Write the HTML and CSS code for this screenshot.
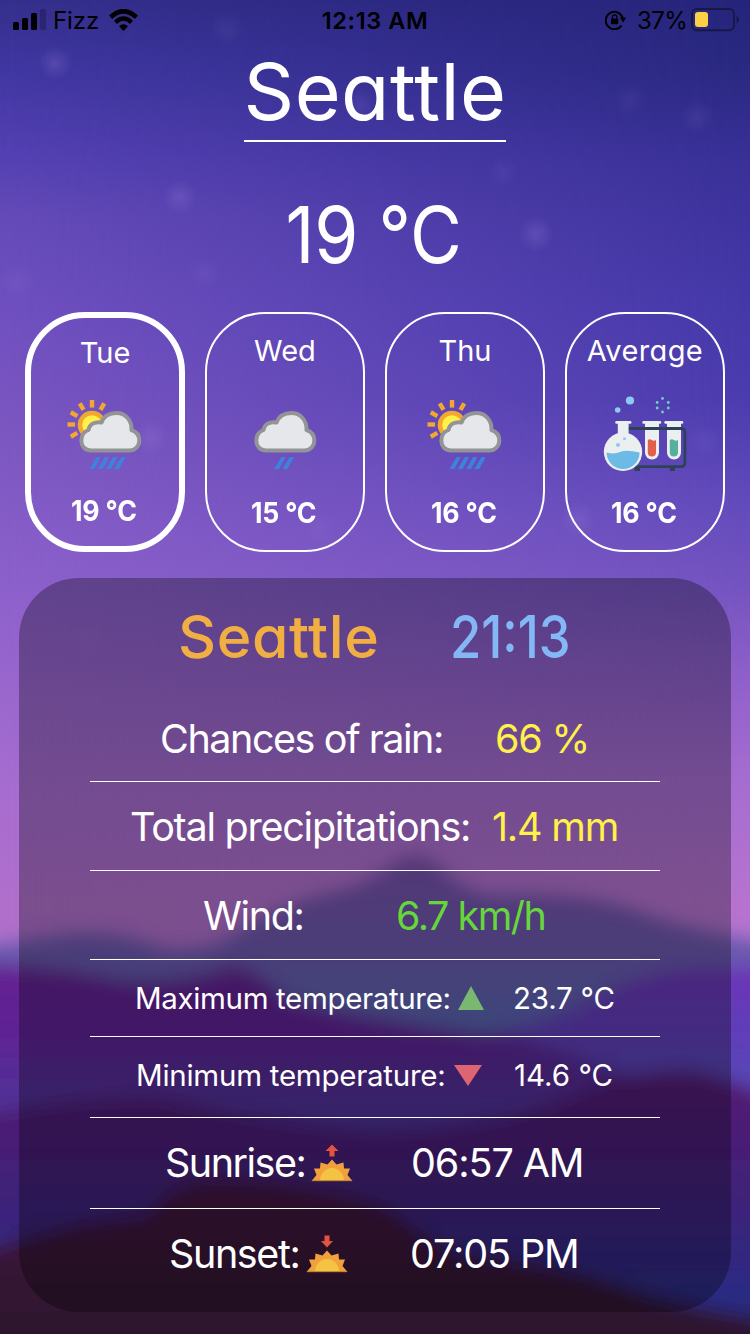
FILE: index.html
```
<!DOCTYPE html>
<html lang="en">
<head>
<meta charset="utf-8">
<title>Weather</title>
<link rel="stylesheet" href="styles.css">
</head>
<body>
<div class="app">
  <svg class="scene" viewBox="0 0 750 1334" aria-hidden="true">
    <defs>
      <linearGradient id="far" x1="0" y1="860" x2="0" y2="1040" gradientUnits="userSpaceOnUse"><stop offset="0" stop-color="#774faa"/><stop offset=".5" stop-color="#6b58ad"/><stop offset="1" stop-color="#5368b0"/></linearGradient>
      <linearGradient id="right" x1="0" y1="965" x2="0" y2="1090" gradientUnits="userSpaceOnUse"><stop offset="0" stop-color="#6c33b8"/><stop offset="1" stop-color="#5548b8"/></linearGradient>
      <linearGradient id="mid" x1="0" y1="960" x2="0" y2="1130" gradientUnits="userSpaceOnUse"><stop offset="0" stop-color="#642091"/><stop offset=".45" stop-color="#5e2494"/><stop offset="1" stop-color="#4a3698"/></linearGradient>
      <linearGradient id="near" x1="0" y1="1080" x2="0" y2="1290" gradientUnits="userSpaceOnUse"><stop offset="0" stop-color="#531a72"/><stop offset=".5" stop-color="#412178"/><stop offset="1" stop-color="#2b2a82"/></linearGradient>
      <linearGradient id="front" x1="0" y1="1180" x2="0" y2="1334" gradientUnits="userSpaceOnUse"><stop offset="0" stop-color="#42183e"/><stop offset="1" stop-color="#2c162d"/></linearGradient>
      <radialGradient id="star"><stop offset="0" stop-color="#a78be0" stop-opacity=".22"/><stop offset="1" stop-color="#a78be0" stop-opacity="0"/></radialGradient>
      <filter id="soft" x="-10%" y="-20%" width="120%" height="140%"><feGaussianBlur stdDeviation="9"/></filter>
    </defs>
    <g fill="url(#star)">
      <circle cx="55" cy="63" r="17"/><circle cx="227" cy="29" r="17" opacity=".4"/><circle cx="360" cy="105" r="16" opacity=".6"/><circle cx="180" cy="197" r="17"/><circle cx="536" cy="234" r="18"/><circle cx="697" cy="117" r="17" opacity=".5"/><circle cx="630" cy="100" r="16" opacity=".35"/><circle cx="503" cy="172" r="15" opacity=".4"/><circle cx="205" cy="273" r="15" opacity=".4"/><circle cx="18" cy="282" r="17" opacity=".4"/><circle cx="151" cy="438" r="18" opacity=".8"/><circle cx="578" cy="520" r="18" opacity=".8"/><circle cx="320" cy="528" r="16" opacity=".4"/><circle cx="704" cy="441" r="16" opacity=".4"/><circle cx="88" cy="640" r="18" opacity=".4"/>
    </g>
    <g filter="url(#soft)">
      <path fill="url(#far)" d="M-40 950L40 938Q110 925 160 948Q210 955 240 930Q290 900 350 888Q380 875 395 862Q415 850 435 862Q460 890 490 895Q590 892 640 912Q700 935 790 945V1150H-40Z"/>
      <path fill="url(#right)" d="M440 1040Q530 1030 590 1000Q650 965 720 968L790 965V1150H440Z"/>
      <path fill="url(#mid)" d="M-40 962Q60 965 120 980Q180 985 235 965Q260 972 290 1000Q380 1022 500 1035Q570 1050 620 1072L790 1110V1180H-40Z"/>
      <path fill="url(#near)" d="M-40 1118Q80 1095 160 1098Q260 1120 370 1130Q480 1130 560 1100Q620 1070 690 1070Q740 1080 790 1105V1380H-40Z"/>
      <path fill="url(#front)" d="M-40 1265Q30 1225 150 1215Q170 1180 215 1180Q310 1182 385 1206Q420 1235 460 1255Q560 1262 640 1292Q700 1310 790 1322V1400H-40Z"/>
    </g>
  </svg>

  <div class="status">
    <div class="status-left">
      <svg width="34" height="22" viewBox="13 9 34 22"><rect x="13" y="22" width="6" height="8" rx="1.5"/><rect x="22" y="18" width="6" height="12" rx="1.5"/><rect x="31" y="13" width="6" height="17" rx="1.5"/><rect x="40" y="9" width="6" height="21" rx="1.5" opacity=".22"/></svg>
      <span class="carrier">Fizz</span>
      <svg width="30" height="22" viewBox="109 9 30 22" fill="none" stroke="#000"><path stroke-width="4.6" d="M110.6 17.3Q123.5 5.2 136.4 17.3"/><path stroke-width="4.4" d="M115.5 22.3Q123.5 14.8 131.5 22.3"/><path fill="#000" stroke="none" d="M119 26.3Q123.5 22.2 128 26.3L123.5 31Z"/></svg>
    </div>
    <span class="clock">12:13 AM</span>
    <div class="status-right">
      <svg width="22" height="20" viewBox="605 11 22 20" fill="none" stroke="#000"><path stroke-width="2" d="M621.6 26.5A8.7 8.7 0 1 1 623 20"/><path fill="#000" stroke="none" d="M619.8 18.6H626L623.2 23.5Z"/><rect x="611" y="19.5" width="7.2" height="5.8" rx="1" fill="#000" stroke="none"/><path stroke-width="1.3" d="M612.4 20V18a2.2 2.2 0 0 1 4.4 0V20"/></svg>
      <span class="charge">37%</span>
      <svg width="50" height="24" viewBox="691 8 50 24"><rect x="692" y="9" width="42" height="21.3" rx="5" fill="none" stroke="#171848" stroke-width="2"/><rect x="695" y="12" width="13" height="15" rx="3" fill="#fbd044"/><path fill="#171848" d="M736.5 16Q739 17 739 19.5Q739 22 736.5 23Z"/></svg>
    </div>
  </div>

  <h1 class="city"><span>Seattle</span></h1>
  <div class="now"><span>19 °C</span></div>

  <div class="cards">
    <div class="card card-active">
      <span class="day">Tue</span>
      <svg width="80" height="80" viewBox="65 392 80 80"><g fill="#f2a731"><g id="rays"><rect x="89.800" y="400" width="4.400" height="7.600"/><rect x="89.800" y="400" width="4.400" height="7.600" transform="rotate(30 92 424.5)"/><rect x="89.800" y="400" width="4.400" height="7.600" transform="rotate(-30 92 424.5)"/><rect x="89.800" y="400" width="4.400" height="7.600" transform="rotate(-60 92 424.5)"/><rect x="89.800" y="400" width="4.400" height="7.600" transform="rotate(-90 92 424.5)"/><rect x="89.800" y="400" width="4.400" height="7.600" transform="rotate(-120 92 424.5)"/></g><circle cx="92" cy="425" r="14.3"/></g><circle cx="92" cy="425" r="9.8" fill="#fff04a"/><path id="cloud" fill="#e6e7ea" stroke="#929498" stroke-width="4" stroke-linejoin="round" d="M91 450.5C84.500 450.500 81.300 445.500 81.300 440.500C81.300 435 84.500 431.500 88.500 430C89.500 424 95 421.500 101.500 422.500C104 416 110 413 116.500 413C125 413 132 420 131.500 430C136 431.500 139.300 435 139.300 440.500C139.300 446 135 450.500 129.500 450.500Z"/><path fill="#3d82dc" d="M98 457h4.300l-6.500 12h-4.800zM106.300 457h4.300l-6.500 12h-4.800zM114.600 457h4.300l-6.500 12h-4.800zM122.900 457h4.300l-6.500 12h-4.800z" transform="translate(-1.500 0)"/></svg>
      <span class="temp">19 °C</span>
    </div>
    <div class="card">
      <span class="day">Wed</span>
      <svg width="80" height="80" viewBox="70 392 80 80"><use href="#cloud"/><path fill="#3d82dc" d="M106.300 457h4.300l-6.500 12h-4.800zM114.600 457h4.300l-6.500 12h-4.800z"/></svg>
      <span class="temp">15 °C</span>
    </div>
    <div class="card">
      <span class="day">Thu</span>
      <svg width="80" height="80" viewBox="65 392 80 80"><g fill="#f2a731"><use href="#rays"/><circle cx="92" cy="425" r="14.3"/></g><circle cx="92" cy="425" r="9.8" fill="#fff04a"/><use href="#cloud"/><path fill="#3d82dc" d="M98 457h4.300l-6.500 12h-4.800zM106.300 457h4.300l-6.500 12h-4.800zM114.600 457h4.300l-6.500 12h-4.800zM122.900 457h4.300l-6.500 12h-4.800z" transform="translate(-1.500 0)"/></svg>
      <span class="temp">16 °C</span>
    </div>
    <div class="card">
      <span class="day avg">Average</span>
      <svg width="84" height="80" viewBox="603 392 84 80"><circle cx="630" cy="400.500" r="4.100" fill="#8ec9f2"/><circle cx="617.700" cy="410" r="2.800" fill="#8ec9f2"/><g fill="#72cfc2"><circle cx="662.500" cy="398.500" r="1.400"/><circle cx="668.300" cy="402.500" r="1.400"/><circle cx="668.300" cy="408" r="1.400"/><circle cx="662.500" cy="412" r="1.400"/><circle cx="657.200" cy="408" r="1.400"/><circle cx="657.200" cy="402.500" r="1.400"/></g>
      <g fill="#ebeff0"><rect x="642.300" y="421" width="19" height="2.800" rx="1.400"/><path d="M645 422h14v30.500a7 7 0 0 1-14 0z"/><rect x="664.300" y="421" width="19" height="2.800" rx="1.400"/><path d="M667 422h14v30.500a7 7 0 0 1-14 0z"/></g>
      <path fill="#e0604a" d="M647.800 440q2-1.500 4 0t4.200 0v12.500a4.100 4.100 0 0 1-8.200 0z"/><path fill="#57b09c" d="M669.800 440q2-1.500 4 0t4.200 0v12.500a4.100 4.100 0 0 1-8.200 0z"/>
      <path fill="none" stroke="#2f4158" stroke-width="2.800" d="M628 428.500H681Q684.900 428.500 684.900 432.500V462.500Q684.900 466.700 681 466.700H634"/><path fill="#2f4158" d="M634.500 466h5.500v5h-5.500zM670 466h5v5h-5z"/>
      <g fill="#ebeff0"><rect x="615.200" y="421" width="16.300" height="2.800" rx="1.400"/><path d="M617.800 422h10.800v13h-10.800z"/><circle cx="623" cy="451.800" r="19.200"/></g><path fill="#6bbbe6" d="M606.600 452.500Q614 454.500 620 452T639.600 452.500A16.500 16.500 0 0 1 606.600 452.500"/><circle cx="618" cy="445" r="2.100" fill="#8ec9f2"/><circle cx="624.500" cy="438.700" r="1.500" fill="#8ec9f2"/></svg>
      <span class="temp">16 °C</span>
    </div>
  </div>

  <section class="panel">
    <div class="heading"><span class="place">Seattle</span><span class="time">21:13</span></div>
    <div class="rows">
      <div class="row rain"><span class="label">Chances of rain:</span><span class="value">66 %</span></div>
      <div class="row precip"><span class="label">Total precipitations:</span><span class="value">1.4 mm</span></div>
      <div class="row wind"><span class="label">Wind:</span><span class="value">6.7 km/h</span></div>
      <div class="row max"><span class="label">Maximum temperature:</span><svg width="28" height="24" viewBox="0 0 28 24"><path fill="#78b870" d="M14 0L27 24H1Z"/></svg><span class="value">23.7 °C</span></div>
      <div class="row min"><span class="label">Minimum temperature:</span><svg width="28" height="21" viewBox="0 0 28 21"><path fill="#dc6473" d="M0 0H28L14 21Z"/></svg><span class="value">14.6 °C</span></div>
      <div class="row sunrise"><span class="label">Sunrise:</span><svg width="42" height="38" viewBox="0 0 42 38"><path fill="#e15540" d="M21 0.500L27.500 7H23.500V12.500H18.500V7H14.500Z"/><g id="sun"><path fill="#f2a03c" d="M0.500 37L5.500 31L3 24.500L9 24.500L9.500 18.500L16.500 20.500L21 15.500L25.500 20.500L32.500 18.500L33 24.500L39 24.500L36.500 31L41.500 37Z"/><path fill="#f4c343" d="M9 36.500A12 12.500 0 0 1 33 36.500Z"/><path stroke="#b97d2c" d="M1 36.700H41"/></g></svg><span class="value">06:57 AM</span></div>
      <div class="row sunset"><span class="label">Sunset:</span><svg width="42" height="38" viewBox="0 0 42 38"><path fill="#e15540" d="M18.500 0.500H23.500V6H27L21 12.500L15 6H18.500Z"/><use href="#sun"/></svg><span class="value">07:05 PM</span></div>
    </div>
  </section>
</div>
</body>
</html>
```
FILE: styles.css
```
* { box-sizing: border-box; }
body { margin: 0; font-family: Inter, "Liberation Sans", sans-serif; color: #fff; }
svg { display: block; flex: none; }

.app {
  position: relative;
  isolation: isolate;
  width: 750px;
  height: 1334px;
  overflow: hidden;
  background: linear-gradient(#352f8c 0, #3f36a0 60px, #5340b2 150px, #654bb9 220px, #7050c0 310px, #7e58c2 450px, #8c60cb 580px, #9b68ce 700px, #a86dd0 800px, #b070cc 900px);
}
.app::before {
  content: "";
  position: absolute;
  inset: 0;
  z-index: -2;
  background: linear-gradient(#25247a 0, #2a2981 70px, #393097 160px, #4438a8 300px, #4b3cae 400px, #614abb 500px, #7253bf 580px, #8f60ca 680px, #a56dd0 780px, #b573cf 900px);
  mask-image: linear-gradient(to right, transparent, #000);
}
.scene { position: absolute; inset: 0; width: 750px; height: 1334px; z-index: -1; }

.status {
  display: grid;
  grid-template-columns: 1fr auto 1fr;
  align-items: center;
  height: 40px;
  padding: 0 9px 0 13px;
  color: #000;
  font-size: 24px;
}
.status-left, .status-right { display: flex; align-items: center; }
.status-right { justify-content: flex-end; }
.carrier { width: 55px; padding-left: 6px; margin-right: 7px; letter-spacing: -.1px; }
.clock { margin-right: 4px; font-weight: 600; font-size: 23.5px; letter-spacing: .6px; }
.charge { width: 54px; margin-left: 10px; letter-spacing: -.6px; }

.city, .now, .day, .temp, .heading { font-feature-settings: "cv11"; white-space: nowrap; }
.city { display: flex; justify-content: center; width: 262px; height: 102px; margin: 0 auto; border-bottom: 2px solid #fff; font-size: 79px; font-weight: 400; line-height: 103px; letter-spacing: .4px; }
.now { height: 170px; padding: 15px 3px 0 0; line-height: 155px; text-align: center; font-size: 79px; font-weight: 420; transform: scaleX(.9); }

.cards { display: flex; gap: 20px; padding: 0 25px; height: 240px; }
.card { display: flex; flex-direction: column; align-items: center; justify-content: space-between; width: 160px; padding: 19px 0; border: 2px solid #fff; border-radius: 60px; }
.card-active { border-width: 6px; padding: 17px 0; }
.day { font-size: 29px; line-height: 36px; font-weight: 400; }
.avg { letter-spacing: .4px; }
.temp { padding-right: 2px; font-size: 29px; line-height: 36px; font-weight: 650; letter-spacing: -.2px; transform: scaleX(.92); }

.panel { width: 712px; height: 734px; margin: 26px auto 0; border-radius: 60px; background: rgba(0, 0, 0, .3); }
.heading { display: flex; height: 118px; padding-left: 159px; line-height: 118px; font-size: 59px; font-weight: 500; }
.place { width: 272px; color: #f0ae43; letter-spacing: .6px; }
.time { color: #83b7f5; transform: scaleX(.86); transform-origin: left; }

.rows { width: 570px; margin: 0 auto; }
.row { display: flex; align-items: center; border-bottom: 1px solid #fff; font-size: 39.5px; white-space: nowrap; letter-spacing: -1.4px; }
.row:last-child { border-bottom: 0; }
.rain { height: 86px; padding-left: 70px; }
.rain .label { width: 335px; letter-spacing: -1.45px; }
.precip { height: 89px; padding: 2px 0 0 40px; }
.precip .label { width: 362px; letter-spacing: -1.25px; }
.rain .value, .precip .value { color: #fff04a; letter-spacing: -1.2px; }
.wind { height: 89px; padding: 1px 0 0 113px; }
.wind .label { width: 193px; }
.wind .value { color: #66d63c; letter-spacing: -1.5px; }
.max, .min { font-size: 29.5px; letter-spacing: -.35px; }
.max { height: 77px; padding-left: 45px; }
.max .label { width: 322px; }
.min { height: 81px; padding: 0 0 4px 46px; }
.min .label { width: 318px; letter-spacing: -.25px; }
.max .value { padding-left: 28px; letter-spacing: -.2px; }
.min .value { padding-left: 32px; letter-spacing: 0; }
.sunrise { height: 91px; padding-left: 75px; }
.sunrise .label { width: 146px; letter-spacing: -1.5px; }
.sunrise .value { padding-left: 58px; letter-spacing: -1.1px; }
.sunset { height: 90px; padding-left: 79px; }
.sunset .label { width: 137px; letter-spacing: -1.4px; }
.sunset .value { padding-left: 62px; letter-spacing: -1.1px; }
```
